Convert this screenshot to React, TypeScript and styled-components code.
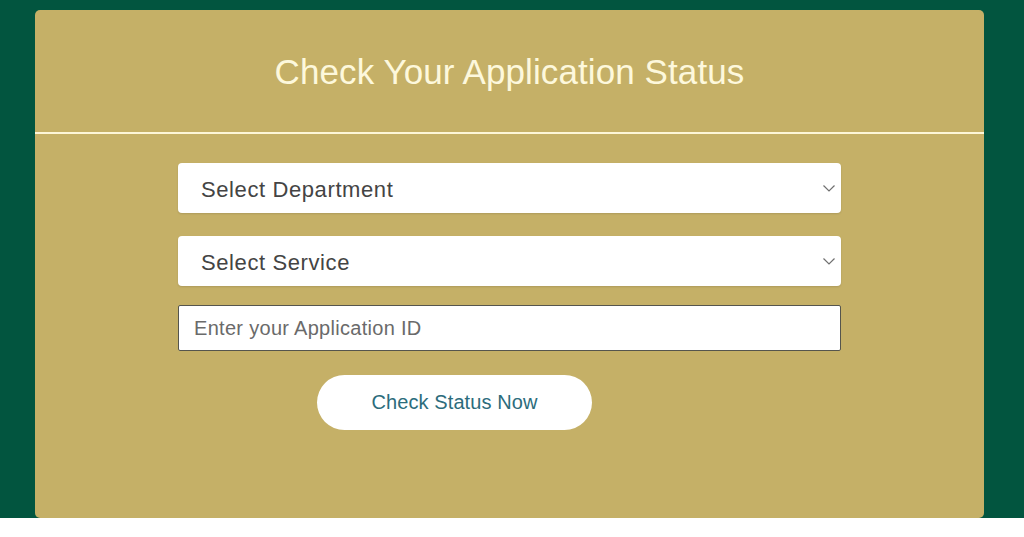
import React from "react";
import styled, { createGlobalStyle } from "styled-components";

const Global = createGlobalStyle`
  html, body { margin: 0; padding: 0; background: #ffffff; }
  body { font-family: "Liberation Sans", Arial, sans-serif; }
  * { box-sizing: border-box; }
`;

const Page = styled.div`
  width: 1024px;
  height: 537px;
  background: #ffffff;
`;

const Band = styled.section`
  height: 518px;
  background: #02553f;
  padding: 10px 40px 0 35px;
  display: flex;
`;

const Card = styled.div`
  flex: 1;
  background: #c5b067;
  border-radius: 5px;
  display: flex;
  flex-direction: column;
`;

const Header = styled.div`
  height: 124px;
  border-bottom: 2px solid #fdf6d8;
  display: flex;
  align-items: center;
  justify-content: center;
  padding-top: 1px;
`;

const Title = styled.h2`
  margin: 0;
  font-weight: 400;
  font-size: 35px;
  color: #fdf8dc;
  letter-spacing: 0.1px;
`;

const Form = styled.form`
  display: flex;
  flex-direction: column;
  align-items: flex-start;
  padding: 29px 0 0 143px;
`;

const SelectBox = styled.div<{ $gap: number }>`
  width: 663px;
  height: 50px;
  background: #ffffff;
  border-radius: 4px;
  box-shadow: 0 1px 2px rgba(0, 0, 0, 0.12);
  display: flex;
  align-items: center;
  justify-content: space-between;
  padding: 3px 5px 0 23px;
  margin-bottom: ${(p) => p.$gap}px;
  font-size: 22px;
  letter-spacing: 0.6px;
  color: #444444;
`;

const Chevron = styled.svg`
  width: 14px;
  height: 14px;
  margin-top: -3px;
  color: #707070;
`;

const IdInput = styled.input`
  width: 663px;
  height: 46px;
  background: #ffffff;
  border: 1px solid #55554d;
  border-radius: 2px;
  padding: 0 15px;
  font-family: "Liberation Sans", Arial, sans-serif;
  font-size: 20px;
  letter-spacing: 0.3px;
  color: #333;
  outline: none;
  &::placeholder { color: #6a6a6a; }
`;

const Submit = styled.button`
  margin: 24px 0 0 139px;
  width: 275px;
  height: 55px;
  border: none;
  border-radius: 28px;
  background: #ffffff;
  font-family: "Liberation Sans", Arial, sans-serif;
  font-size: 20px;
  letter-spacing: 0.1px;
  color: #2c6c7c;
  cursor: pointer;
`;

const ChevronIcon = () => (
  <Chevron viewBox="0 0 14 14" fill="none">
    <path d="M1.5 4.5 L7 10 L12.5 4.5" stroke="currentColor" strokeWidth="1.2" />
  </Chevron>
);

export default function App() {
  return (
    <Page>
      <Global />
      <Band>
        <Card>
          <Header>
            <Title>Check Your Application Status</Title>
          </Header>
          <Form onSubmit={(e) => e.preventDefault()}>
            <SelectBox $gap={23} role="combobox">
              <span>Select Department</span>
              <ChevronIcon />
            </SelectBox>
            <SelectBox $gap={19} role="combobox">
              <span>Select Service</span>
              <ChevronIcon />
            </SelectBox>
            <IdInput placeholder="Enter your Application ID" />
            <Submit type="submit">Check Status Now</Submit>
          </Form>
        </Card>
      </Band>
    </Page>
  );
}
